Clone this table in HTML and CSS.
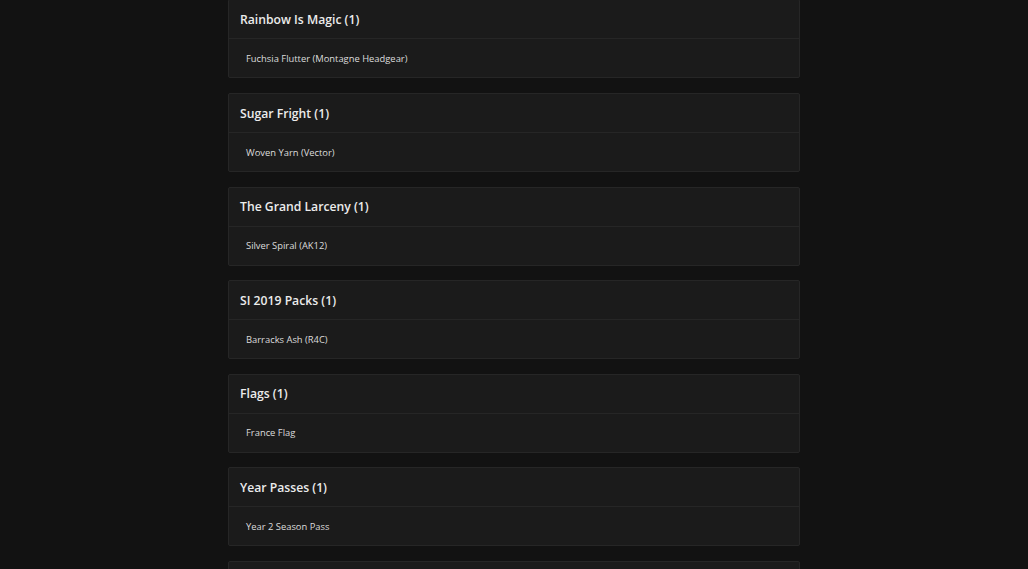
FILE: index.html
```html
<!DOCTYPE html>
<html lang="en">
<head>
    <meta charset="UTF-8">
    <meta name="viewport" content="width=device-width, initial-scale=1.0">
    <title>Collection</title>
    <link rel="stylesheet" href="styles.css">
</head>
<body>
    <div class="container">
        <div class="card">
            <div class="card-header">Rainbow Is Magic (1)</div>
            <div class="card-body">Fuchsia Flutter (Montagne Headgear)</div>
        </div>
        <div class="card">
            <div class="card-header">Sugar Fright (1)</div>
            <div class="card-body">Woven Yarn (Vector)</div>
        </div>
        <div class="card">
            <div class="card-header">The Grand Larceny (1)</div>
            <div class="card-body">Silver Spiral (AK12)</div>
        </div>
        <div class="card">
            <div class="card-header">SI 2019 Packs (1)</div>
            <div class="card-body">Barracks Ash (R4C)</div>
        </div>
        <div class="card">
            <div class="card-header">Flags (1)</div>
            <div class="card-body">France Flag</div>
        </div>
        <div class="card">
            <div class="card-header">Year Passes (1)</div>
            <div class="card-body">Year 2 Season Pass</div>
        </div>
        <!-- next card starts just below the fold -->
        <div class="card">
            <div class="card-header"></div>
            <div class="card-body"></div>
        </div>
    </div>
</body>
</html>
```

FILE: styles.css
```css
html, body {
    margin: 0;
    padding: 0;
    background: #121212;
    color: #e6e6e6;
    font-family: "Open Sans", Arial, sans-serif;
    overflow: hidden;
}

.container {
    width: 572px;
    margin: -0.6px auto 0;
}

.card {
    background: #1b1b1b;
    border: 1px solid #262626;
    border-radius: 2px;
    margin-bottom: 14.6px;
}

.card-header {
    height: 38px;
    display: flex;
    align-items: center;
    padding: 0 11px;
    font-size: 12.2px;
    font-weight: 600;
    color: #ececec;
    border-bottom: 1px solid #262626;
}

.card-body {
    height: 38px;
    display: flex;
    align-items: center;
    padding: 0 17px;
    font-size: 9.4px;
    color: #dcdcdc;
}
```
